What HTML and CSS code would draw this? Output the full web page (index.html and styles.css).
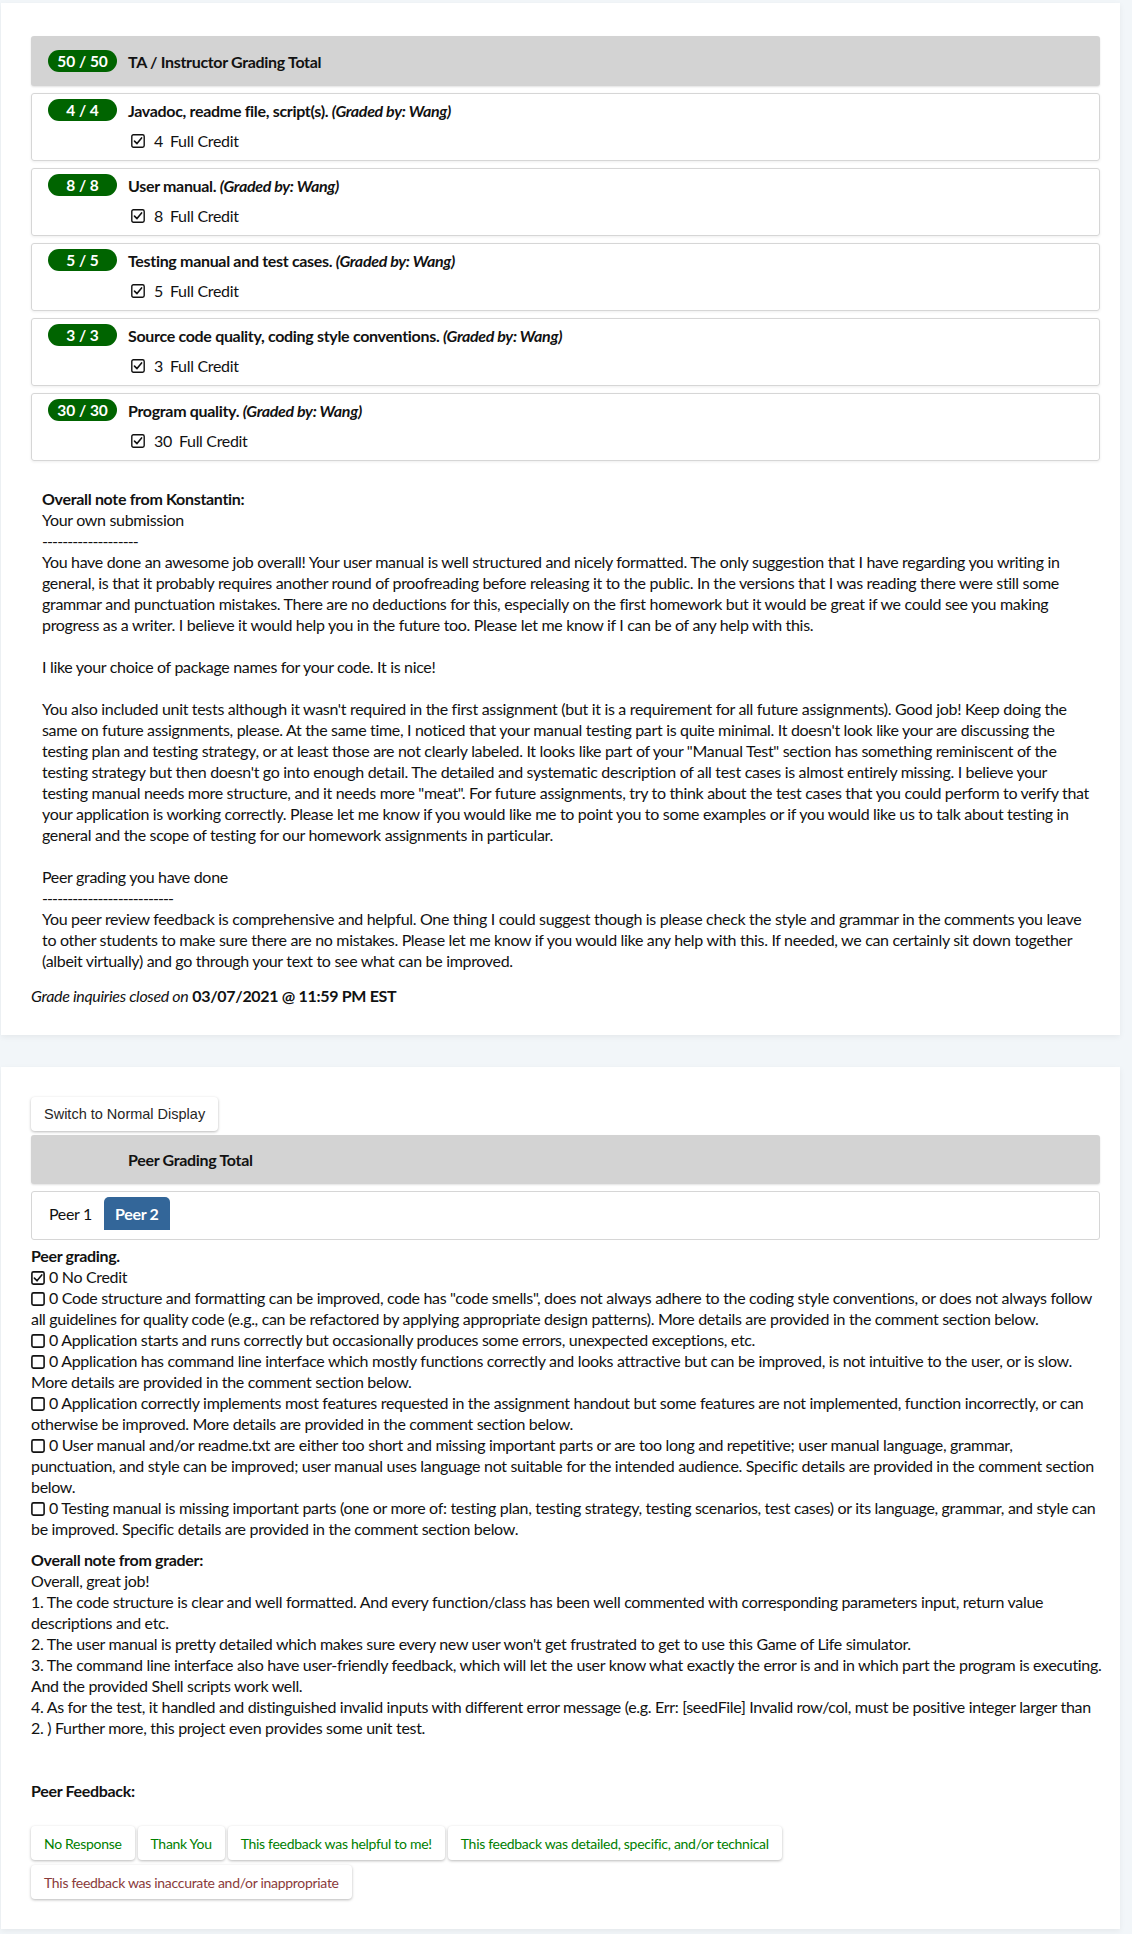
FILE: index.html
```html
<!DOCTYPE html>
<html lang="en">
<head>
<meta charset="utf-8">
<title>Grades</title>
<link rel="stylesheet" href="styles.css">
</head>
<body>
<div class="card card-ta">
  <div class="total-bar">
    <span class="badge">50 / 50</span>
    <span>TA / Instructor Grading Total</span>
  </div>

  <div class="rubric">
    <div class="rubric-head"><span class="badge">4 / 4</span><span>Javadoc, readme file, script(s). <em>(Graded by: Wang)</em></span></div>
    <div class="rubric-mark"><svg class="cb" width="14" height="14" viewBox="0 0 14 14"><rect x="0.8" y="0.8" width="12.4" height="12.4" rx="1.6"/><path d="M3.5 7.1 L6 9.6 L10.6 3.9"/></svg><span class="pts">4</span><span class="credit">Full Credit</span></div>
  </div>
  <div class="rubric">
    <div class="rubric-head"><span class="badge">8 / 8</span><span>User manual. <em>(Graded by: Wang)</em></span></div>
    <div class="rubric-mark"><svg class="cb" width="14" height="14" viewBox="0 0 14 14"><rect x="0.8" y="0.8" width="12.4" height="12.4" rx="1.6"/><path d="M3.5 7.1 L6 9.6 L10.6 3.9"/></svg><span class="pts">8</span><span class="credit">Full Credit</span></div>
  </div>
  <div class="rubric">
    <div class="rubric-head"><span class="badge">5 / 5</span><span>Testing manual and test cases. <em>(Graded by: Wang)</em></span></div>
    <div class="rubric-mark"><svg class="cb" width="14" height="14" viewBox="0 0 14 14"><rect x="0.8" y="0.8" width="12.4" height="12.4" rx="1.6"/><path d="M3.5 7.1 L6 9.6 L10.6 3.9"/></svg><span class="pts">5</span><span class="credit">Full Credit</span></div>
  </div>
  <div class="rubric">
    <div class="rubric-head"><span class="badge">3 / 3</span><span>Source code quality, coding style conventions. <em>(Graded by: Wang)</em></span></div>
    <div class="rubric-mark"><svg class="cb" width="14" height="14" viewBox="0 0 14 14"><rect x="0.8" y="0.8" width="12.4" height="12.4" rx="1.6"/><path d="M3.5 7.1 L6 9.6 L10.6 3.9"/></svg><span class="pts">3</span><span class="credit">Full Credit</span></div>
  </div>
  <div class="rubric">
    <div class="rubric-head"><span class="badge">30 / 30</span><span>Program quality. <em>(Graded by: Wang)</em></span></div>
    <div class="rubric-mark"><svg class="cb" width="14" height="14" viewBox="0 0 14 14"><rect x="0.8" y="0.8" width="12.4" height="12.4" rx="1.6"/><path d="M3.5 7.1 L6 9.6 L10.6 3.9"/></svg><span class="pts">30</span><span class="credit">Full Credit</span></div>
  </div>

  <div class="note">
    <b>Overall note from Konstantin:</b><br>
    Your own submission<br>
    <span class="dashes">-------------------</span><br>
    You have done an awesome job overall! Your user manual is well structured and nicely formatted. The only suggestion that I have regarding you writing in general, is that it probably requires another round of proofreading before releasing it to the public. In the versions that I was reading there were still some grammar and punctuation mistakes. There are no deductions for this, especially on the first homework but it would be great if we could see you making progress as a writer. I believe it would help you in the future too. Please let me know if I can be of any help with this.<br>
    <br>
    I like your choice of package names for your code. It is nice!<br>
    <br>
    You also included unit tests although it wasn't required in the first assignment (but it is a requirement for all future assignments). Good job! Keep doing the same on future assignments, please. At the same time, I noticed that your manual testing part is quite minimal. It doesn't look like your are discussing the testing plan and testing strategy, or at least those are not clearly labeled. It looks like part of your "Manual Test" section has something reminiscent of the testing strategy but then doesn't go into enough detail. The detailed and systematic description of all test cases is almost entirely missing. I believe your testing manual needs more structure, and it needs more "meat". For future assignments, try to think about the test cases that you could perform to verify that your application is working correctly. Please let me know if you would like me to point you to some examples or if you would like us to talk about testing in general and the scope of testing for our homework assignments in particular.<br>
    <br>
    Peer grading you have done<br>
    <span class="dashes">--------------------------</span><br>
    You peer review feedback is comprehensive and helpful. One thing I could suggest though is please check the style and grammar in the comments you leave to other students to make sure there are no mistakes. Please let me know if you would like any help with this. If needed, we can certainly sit down together (albeit virtually) and go through your text to see what can be improved.
  </div>

  <div class="inquiries"><i>Grade inquiries closed on</i> <b>03/07/2021 @ 11:59 PM EST</b></div>
</div>

<div class="card card-peer">
  <button class="switch-btn" type="button">Switch to Normal Display</button>
  <div class="total-bar peer-total">
    <span>Peer Grading Total</span>
  </div>
  <div class="tabs">
    <span class="tab">Peer 1</span>
    <span class="tab tab-active">Peer 2</span>
  </div>

  <div class="peer-title">Peer grading.</div>
  <div class="peer-list">
    <div class="item"><svg class="pcb" width="14" height="14" viewBox="0 0 14 14"><rect x="0.9" y="0.9" width="12.2" height="12.2" rx="1.6"/><path d="M3.4 7.1 L6 9.8 L10.8 3.9"/></svg>0 No Credit</div>
    <div class="item"><svg class="pcb" width="14" height="14" viewBox="0 0 14 14"><rect x="0.9" y="0.9" width="12.2" height="12.2" rx="1.6"/></svg>0 Code structure and formatting can be improved, code has "code smells", does not always adhere to the coding style conventions, or does not always follow all guidelines for quality code (e.g., can be refactored by applying appropriate design patterns). More details are provided in the comment section below.</div>
    <div class="item"><svg class="pcb" width="14" height="14" viewBox="0 0 14 14"><rect x="0.9" y="0.9" width="12.2" height="12.2" rx="1.6"/></svg>0 Application starts and runs correctly but occasionally produces some errors, unexpected exceptions, etc.</div>
    <div class="item"><svg class="pcb" width="14" height="14" viewBox="0 0 14 14"><rect x="0.9" y="0.9" width="12.2" height="12.2" rx="1.6"/></svg>0 Application has command line interface which mostly functions correctly and looks attractive but can be improved, is not intuitive to the user, or is slow. More details are provided in the comment section below.</div>
    <div class="item"><svg class="pcb" width="14" height="14" viewBox="0 0 14 14"><rect x="0.9" y="0.9" width="12.2" height="12.2" rx="1.6"/></svg>0 Application correctly implements most features requested in the assignment handout but some features are not implemented, function incorrectly, or can otherwise be improved. More details are provided in the comment section below.</div>
    <div class="item"><svg class="pcb" width="14" height="14" viewBox="0 0 14 14"><rect x="0.9" y="0.9" width="12.2" height="12.2" rx="1.6"/></svg>0 User manual and/or readme.txt are either too short and missing important parts or are too long and repetitive; user manual language, grammar, punctuation, and style can be improved; user manual uses language not suitable for the intended audience. Specific details are provided in the comment section below.</div>
    <div class="item"><svg class="pcb" width="14" height="14" viewBox="0 0 14 14"><rect x="0.9" y="0.9" width="12.2" height="12.2" rx="1.6"/></svg>0 Testing manual is missing important parts (one or more of: testing plan, testing strategy, testing scenarios, test cases) or its language, grammar, and style can be improved. Specific details are provided in the comment section below.</div>
  </div>

  <div class="grader-note">
    <b>Overall note from grader:</b><br>
    Overall, great job!<br>
    1. The code structure is clear and well formatted. And every function/class has been well commented with corresponding parameters input, return value descriptions and etc.<br>
    2. The user manual is pretty detailed which makes sure every new user won't get frustrated to get to use this Game of Life simulator.<br>
    3. The command line interface also have user-friendly feedback, which will let the user know what exactly the error is and in which part the program is executing. And the provided Shell scripts work well.<br>
    4. As for the test, it handled and distinguished invalid inputs with different error message (e.g. Err: [seedFile] Invalid row/col, must be positive integer larger than 2. ) Further more, this project even provides some unit test.
  </div>

  <div class="feedback-title">Peer Feedback:</div>
  <div class="feedback-btns">
    <button class="fb-btn" type="button">No Response</button>
    <button class="fb-btn" type="button">Thank You</button>
    <button class="fb-btn" type="button">This feedback was helpful to me!</button>
    <button class="fb-btn" type="button">This feedback was detailed, specific, and/or technical</button>
    <button class="fb-btn fb-bad" type="button">This feedback was inaccurate and/or inappropriate</button>
  </div>
</div>
</body>
</html>
```
FILE: styles.css
```css
* { box-sizing: border-box; }
html, body { margin: 0; }
body {
  background: #f2f6f9;
  font-family: Lato, "Noto Sans", sans-serif;
  font-size: 16px;
  line-height: 21px;
  letter-spacing: -0.32px;
  color: #121212;
  padding: 3px 12px 5px 1px;
}
.card {
  background: #fff;
  box-shadow: 0 2px 6px rgba(0, 0, 0, 0.06);
}
.card-ta { padding: 33px 20px 29px 30px; }
.card-peer { margin-top: 32px; padding: 30px 20px 30px 30px; }

.total-bar {
  background: #d3d3d3;
  border-radius: 3px;
  height: 50px;
  display: flex;
  align-items: center;
  padding-left: 17px;
  font-weight: 700;
  box-shadow: 0 1px 2px rgba(0, 0, 0, 0.12);
}
.badge {
  flex: none;
  width: 69px;
  height: 22px;
  border-radius: 11px;
  background: #006400;
  color: #fff;
  font-weight: 700;
  font-size: 15.5px;
  letter-spacing: 0;
  display: flex;
  align-items: center;
  justify-content: center;
  margin-right: 11px;
}
.rubric {
  margin-top: 7px;
  height: 68px;
  border: 1px solid #d6d6d6;
  border-radius: 3px;
  box-shadow: 0 1px 3px rgba(0, 0, 0, 0.07);
  padding: 5px 0 9px 16px;
}
.rubric-head {
  display: flex;
  align-items: center;
  height: 22px;
  font-weight: 700;
}
.rubric-head em { font-style: italic; }
.rubric-mark {
  margin-top: 9px;
  height: 21px;
  padding-left: 83px;
  display: flex;
  align-items: center;
}
.cb { flex: none; }
.cb rect, .pcb rect { fill: none; stroke: #121212; stroke-width: 1.4; }
.cb path, .pcb path { fill: none; stroke: #121212; stroke-width: 1.6; stroke-linecap: round; stroke-linejoin: round; }
.pts { margin-left: 9px; }
.credit { margin-left: 7px; }

.note {
  margin-top: 27px;
  padding: 0 8px 0 11px;
}
.dashes { letter-spacing: -0.9px; }
.inquiries { margin-top: 14px; }

.switch-btn {
  display: block;
  height: 34px;
  padding: 0 13px;
  border: none;
  border-radius: 4px;
  background: #fff;
  box-shadow: 0 1px 3px rgba(0, 0, 0, 0.28);
  font-family: "Liberation Sans", Arial, sans-serif;
  font-size: 14.5px;
  letter-spacing: 0;
  color: #262626;
}
.peer-total {
  margin-top: 4px;
  height: 49px;
  padding-left: 97px;
}
.tabs {
  margin-top: 7px;
  height: 49px;
  border: 1px solid #d6d6d6;
  border-radius: 3px;
  padding: 5px 0 0 4px;
  display: flex;
  align-items: flex-start;
}
.tab {
  height: 33px;
  line-height: 33px;
  padding: 0 12px 0 13px;
  border-radius: 5px 5px 0 0;
}
.tab-active {
  padding: 0 11px;
  background: #336699;
  color: #fff;
  font-weight: 700;
}
.peer-title { margin-top: 5px; font-weight: 700; }
.pcb { vertical-align: -2px; margin-right: 4px; }
.pcb rect { stroke-width: 1.6; }
.grader-note { margin-top: 10px; margin-right: -4px; }
.feedback-title { margin-top: 42px; font-weight: 700; }
.feedback-btns {
  margin-top: 25px;
  display: flex;
  flex-wrap: wrap;
  gap: 5px 3px;
}
.fb-btn {
  margin: 0;
  height: 34px;
  padding: 0 13px;
  border: none;
  border-radius: 4px;
  background: #fff;
  box-shadow: 0 1px 3px rgba(0, 0, 0, 0.28);
  font-family: Lato, "Noto Sans", sans-serif;
  font-size: 14px;
  letter-spacing: -0.3px;
  color: #008000;
}
.fb-bad { color: #8a3b3b; }
```
